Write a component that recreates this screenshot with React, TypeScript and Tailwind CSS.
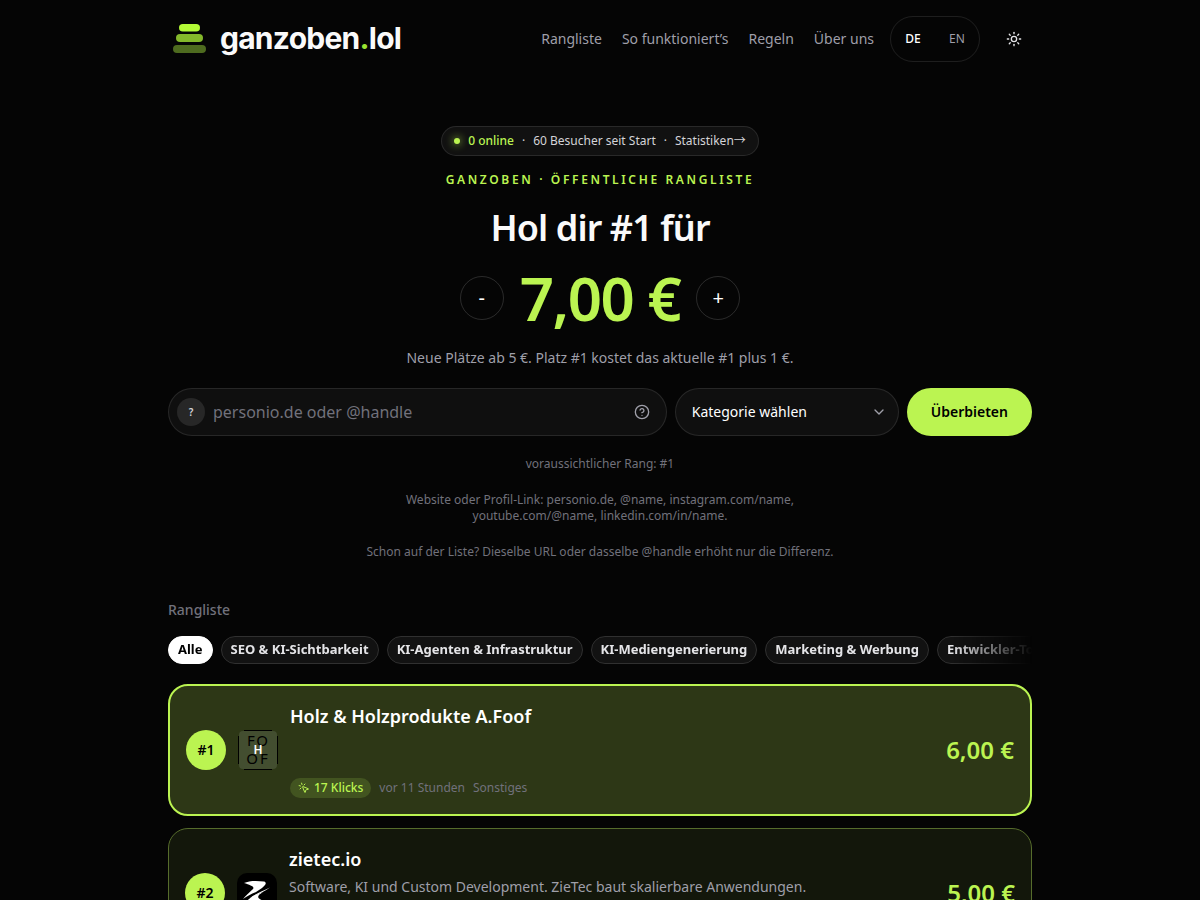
import { ReactNode } from "react"
import { ChevronDown, CircleHelp, MousePointerClick, Sun } from "lucide-react"

interface Entry {
  rank: number
  title: string
  description?: string
  clicks: number
  age: string
  category: string
  price: string
  logo: ReactNode
}

const navLinks = ["Rangliste", "So funktioniert’s", "Regeln", "Über uns"]

const categories = [
  "Alle",
  "SEO & KI-Sichtbarkeit",
  "KI-Agenten & Infrastruktur",
  "KI-Mediengenerierung",
  "Marketing & Werbung",
  "Entwickler-Tools",
]

const entries: Entry[] = [
  {
    rank: 1,
    title: "Holz & Holzprodukte A.Foof",
    clicks: 17,
    age: "vor 11 Stunden",
    category: "Sonstiges",
    price: "6,00 €",
    logo: <FoofLogo />,
  },
  {
    rank: 2,
    title: "zietec.io",
    description: "Software, KI und Custom Development. ZieTec baut skalierbare Anwendungen.",
    clicks: 12,
    age: "vor 12 Stunden",
    category: "Entwickler-Tools",
    price: "5,00 €",
    logo: <ZietecLogo />,
  },
]

function FoofLogo() {
  return (
    <svg className="h-10 w-10 shrink-0" viewBox="0 0 40 40" role="img" aria-label="Foof">
      <rect x="1" y="1" width="38" height="38" rx="4" fill="#434e30" />
      <path d="M6 0.500H34M6 39.500H34M0.500 6V34M39.500 6V34" stroke="#000" strokeWidth="1" />
      <g fill="#000" textAnchor="middle" className="font-['Noto_Sans',sans-serif] text-[15px]">
        <text x="13" y="16">F</text>
        <text x="24" y="16">O</text>
        <text x="14" y="34">O</text>
        <text x="26" y="34">F</text>
      </g>
      <text x="20" y="24" fill="#fff" textAnchor="middle" className="font-['Noto_Sans',sans-serif] text-xs font-semibold">
        H
      </text>
    </svg>
  )
}

function ZietecLogo() {
  return (
    <svg className="h-10 w-10 shrink-0" viewBox="0 0 40 40" aria-hidden="true">
      <rect width="40" height="40" rx="10" fill="#000" />
      <path fill="#fff" d="M7 10C12 7.500 20 7.500 27 8.500C30 9.500 29 12 25 15L19 19C14 21 10 23 6 26C9 22 13 19 16 16C18 13.500 13 12 7 10Z" />
      <path fill="#fff" d="M33 14.500C27 19 19 22 13 25C19 20.500 26 18 33 14.500Z" />
      <path fill="#fff" d="M26 19C22 21.500 20.500 23 21.500 25C23 27 27 28 32 30C24 33 14 33 8 31C9 28.500 12 25.500 16 23Z" />
    </svg>
  )
}

function Brand() {
  return (
    <a href="#" className="flex items-center gap-3.5 pl-1">
      <svg className="h-8 w-[34px]" viewBox="0 0 34 32" aria-hidden="true">
        <rect x="7" y="1" width="21" height="7.500" rx="3.750" fill="#b4fb36" />
        <rect x="4" y="11" width="27" height="8" rx="4" fill="#84b82b" />
        <rect x="1" y="22" width="33" height="8" rx="4" fill="#4e6b1f" />
      </svg>
      <span className="pb-0.5 font-['Inter',sans-serif] text-[30px] leading-8 font-bold tracking-tight text-zinc-50">
        ganzoben<span className="text-[#9be531]">.</span>lol
      </span>
    </a>
  )
}

function Header() {
  return (
    <header className="mx-auto flex w-full max-w-4xl items-center justify-between px-4 py-4">
      <Brand />
      <div className="flex items-center gap-4">
        <nav className="flex items-center gap-5 text-sm text-zinc-400">
          {navLinks.map((link) => (
            <a key={link} href="#" className="hover:text-white">
              {link}
            </a>
          ))}
        </nav>
        <div className="flex rounded-full border border-white/10 text-xs">
          <button type="button" className="h-11 w-11 font-medium text-white">
            DE
          </button>
          <button type="button" className="h-11 w-11 text-zinc-400">
            EN
          </button>
        </div>
        <button type="button" aria-label="Design wechseln" className="flex h-9 w-9 items-center justify-center text-zinc-200">
          <Sun className="h-4 w-4" />
        </button>
      </div>
    </header>
  )
}

function StatsPill() {
  return (
    <a
      href="#"
      className="inline-flex items-center gap-2 rounded-full border border-white/10 bg-[#111111] px-3 py-1.5 text-xs text-zinc-300"
    >
      <span className="h-1.5 w-1.5 rounded-full bg-lime-300 shadow-[0_0_8px_#bbf451]" />
      <span className="font-medium text-lime-300">0 online</span>
      <span>·</span>
      <span>60 Besucher seit Start</span>
      <span>·</span>
      <span>
        Statistiken<span className="font-['Noto_Sans_CJK_JP',sans-serif] leading-none">→</span>
      </span>
    </a>
  )
}

function BidForm() {
  return (
    <form className="mt-5 flex w-full gap-2" onSubmit={(e) => e.preventDefault()}>
      <div className="flex h-12 min-w-0 flex-1 items-center gap-2 rounded-full border border-white/10 bg-[#0f0f0f] pr-4 pl-2">
        <span className="flex h-7 w-7 shrink-0 items-center justify-center rounded-full bg-[#272727] text-[10px] font-semibold text-zinc-300">
          ?
        </span>
        <input
          type="text"
          aria-label="Website oder Handle"
          placeholder="personio.de oder @handle"
          className="min-w-0 flex-1 bg-transparent text-base text-white outline-none placeholder:text-zinc-500"
        />
        <button type="button" aria-label="Hilfe" className="text-zinc-400">
          <CircleHelp className="h-4 w-4" />
        </button>
      </div>
      <div className="relative w-56">
        <select
          aria-label="Kategorie"
          className="h-12 w-full appearance-none rounded-full border border-white/10 bg-[#0f0f0f] px-4 text-sm text-white"
        >
          <option>Kategorie wählen</option>
          {categories.slice(1).map((category) => (
            <option key={category}>{category}</option>
          ))}
        </select>
        <ChevronDown className="pointer-events-none absolute top-4 right-3 h-4 w-4 text-zinc-400" />
      </div>
      <button type="submit" className="h-12 rounded-full bg-lime-300 px-6 text-sm font-semibold text-black">
        Überbieten
      </button>
    </form>
  )
}

function Hero() {
  return (
    <section className="flex flex-col items-center pt-12 text-center">
      <StatsPill />
      <p className="mt-4 text-xs font-semibold tracking-[0.22em] text-lime-300 uppercase">
        Ganzoben · Öffentliche Rangliste
      </p>
      <h1 className="mt-5 text-4xl font-semibold tracking-tight text-zinc-50">Hol dir #1 für</h1>
      <div className="mt-5 flex items-center gap-4">
        <button type="button" aria-label="Weniger" className="h-11 w-11 rounded-full border border-white/15 text-xl text-white">
          -
        </button>
        <span className="text-6xl font-semibold tracking-tight text-lime-300">7,00 €</span>
        <button type="button" aria-label="Mehr" className="h-11 w-11 rounded-full border border-white/15 text-xl text-white">
          +
        </button>
      </div>
      <p className="mt-5 text-sm text-zinc-400">Neue Plätze ab 5 €. Platz #1 kostet das aktuelle #1 plus 1 €.</p>
      <BidForm />
      <div className="mt-5 flex flex-col items-center gap-5 text-xs text-zinc-500">
        <p>voraussichtlicher Rang: #1</p>
        <p className="max-w-md">
          Website oder Profil-Link: personio.de, @name, instagram.com/name,
          <br />
          youtube.com/@name, linkedin.com/in/name.
        </p>
        <p>Schon auf der Liste? Dieselbe URL oder dasselbe @handle erhöht nur die Differenz.</p>
      </div>
    </section>
  )
}

function EntryCard({ entry }: { entry: Entry }) {
  const isFirst = entry.rank === 1
  return (
    <li
      className={`flex items-center gap-3 rounded-[20px] p-4 ${
        isFirst ? "border-2 border-lime-300 bg-[#2d3716]" : "border border-[#566c2c] bg-[#13170b]"
      }`}
    >
      <span className="flex h-10 w-10 shrink-0 items-center justify-center rounded-full bg-lime-300 text-sm font-semibold text-black">
        #{entry.rank}
      </span>
      {entry.logo}
      <div className="min-w-0 flex-1">
        <h3 className="text-lg leading-7 font-semibold text-white">{entry.title}</h3>
        <p className="mt-1 min-h-10 text-sm text-zinc-400">{entry.description}</p>
        <div className="mt-1 flex items-center gap-2 text-xs text-zinc-500">
          <span className="flex h-5 items-center gap-1 rounded-full bg-[#425420] px-2 font-medium text-lime-300">
            <MousePointerClick className="h-3 w-3" />
            {entry.clicks} Klicks
          </span>
          <span>{entry.age}</span>
          <span>{entry.category}</span>
        </div>
      </div>
      <span className="text-2xl font-semibold text-lime-300">{entry.price}</span>
    </li>
  )
}

function Leaderboard() {
  return (
    <section className="mt-10 pb-10">
      <h2 className="text-sm font-medium text-zinc-500">Rangliste</h2>
      <div className="mt-4 flex gap-2 overflow-hidden [mask-image:linear-gradient(to_right,black_calc(100%-80px),transparent)]">
        {categories.map((category, i) => (
          <button
            key={category}
            type="button"
            className={`h-7 shrink-0 rounded-full border px-[9px] text-[13px] font-bold whitespace-nowrap ${
              i === 0 ? "border-white bg-white text-black" : "border-[#303030] bg-[#121212] text-zinc-200"
            }`}
          >
            {category}
          </button>
        ))}
      </div>
      <ol className="mt-5 flex flex-col gap-3">
        {entries.map((entry) => (
          <EntryCard key={entry.rank} entry={entry} />
        ))}
      </ol>
    </section>
  )
}

export default function App() {
  return (
    <div className="min-h-screen bg-[#050505] font-['Noto_Sans',sans-serif]">
      <Header />
      <main className="mx-auto w-full max-w-4xl px-4">
        <Hero />
        <Leaderboard />
      </main>
    </div>
  )
}
